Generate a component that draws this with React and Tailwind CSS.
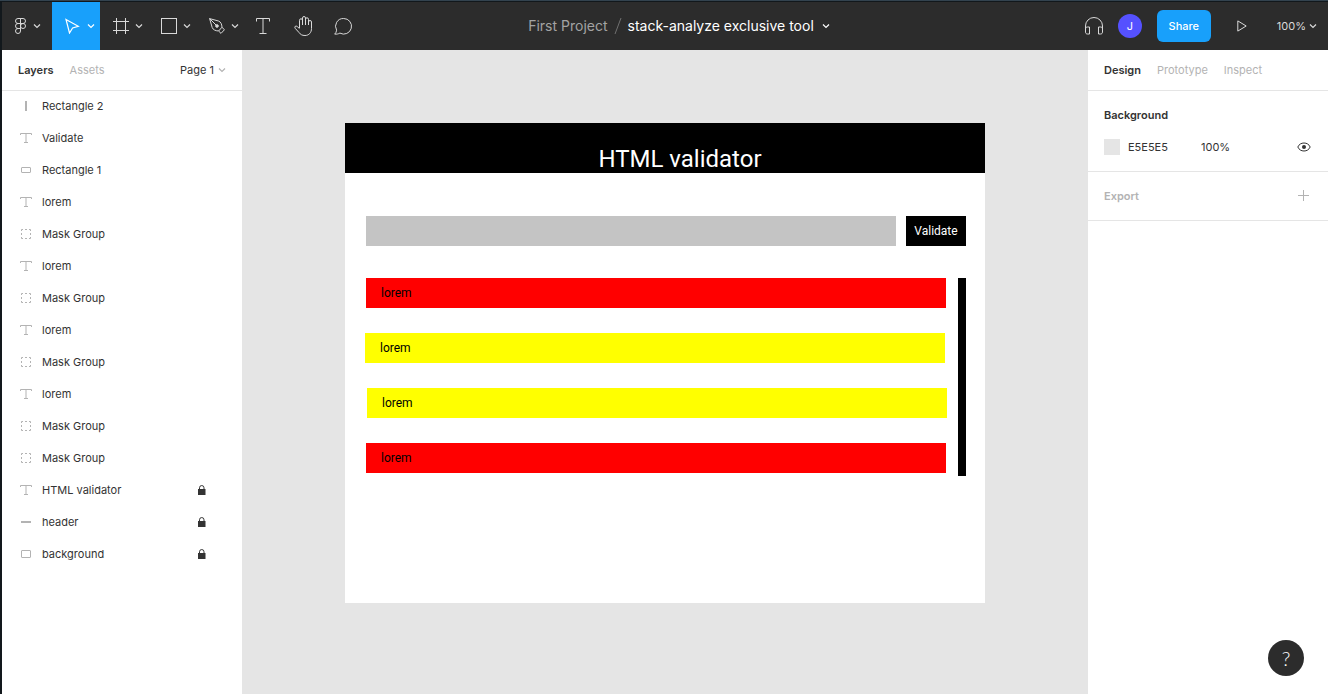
import React from "react";

function Icon({ w = 16, h = 16, className = "", children }) {
  return (
    <svg
      width={w}
      height={h}
      viewBox={`0 0 ${w} ${h}`}
      fill="none"
      stroke="currentColor"
      strokeWidth="1"
      aria-hidden="true"
      className={`shrink-0 ${className}`}
    >
      {children}
    </svg>
  );
}

const Chevron = ({ className = "" }) => (
  <Icon w={8} h={6} className={className}>
    <path d="M1 1.5 4 4.5 7 1.5" strokeWidth="1.2" />
  </Icon>
);

const LogoIcon = () => (
  <Icon w={12} h={16}>
    <path d="M5.5.5H3a2.5 2.5 0 0 0 0 5h2.500zM5.500.5H8a2.500 2.500 0 0 1 0 5H5.500zM5.500 5.500H3a2.500 2.500 0 0 0 0 5h2.500zM5.500 10.500H3A2.500 2.500 0 1 0 5.500 13z" />
    <circle cx="8" cy="8" r="2.5" />
  </Icon>
);

const MoveIcon = () => (
  <Icon>
    <path d="M1 1.5 13.300 8.300 7.600 9.900 4.500 15z" strokeWidth="1.2" />
  </Icon>
);

const FrameIcon = () => (
  <Icon>
    <path d="M3.500 0v16M12.500 0v16M0 3.500h16M0 12.500h16" />
  </Icon>
);

const RectIcon = () => (
  <Icon>
    <rect x=".5" y=".5" width="15" height="15" />
  </Icon>
);

const PenIcon = () => (
  <Icon>
    <path d="M.6.6 9.500 3c2.300.8 3.300 3.200 3.500 6.200L9.600 13C6.500 12.800 4 11.800 3.200 9.500zM.6.6l7 7" />
    <path d="m13 9.200 2.400 2.600-3.400 3.600-2.400-2.400" />
    <circle cx="8" cy="8" r="1.300" fill="currentColor" />
  </Icon>
);

const TextIcon = () => (
  <Icon w={14}>
    <path d="M.5 3.500v-3h13v3M7 .5v15M3.500 15.500h7" />
  </Icon>
);

const HandIcon = () => (
  <Icon w={19} h={20}>
    <path d="M5.500 12V4.300a1.500 1.500 0 0 1 3 0V9M8.500 9V2a1.500 1.500 0 0 1 3 0v7M11.500 9V3.300a1.500 1.500 0 0 1 3 0V9M14.500 6a1.500 1.500 0 0 1 3 0v6.500c0 4-2.500 7-6.500 7-3 0-4.500-1-6-3L1.200 12.300c-1.300-1.700.8-3 2-1.800L5.500 12.600" />
  </Icon>
);

const CommentIcon = () => (
  <Icon w={18} h={17}>
    <path d="M9.700.5a7.800 7.800 0 1 1-3.800 14.600C4.300 16 2.600 16.300.7 16.100c1.100-1 1.700-2.300 1.900-3.900A7.800 7.800 0 0 1 9.700.5z" />
  </Icon>
);

const HeadphonesIcon = () => (
  <Icon w={18} h={18}>
    <path d="M.5 15V9a8.500 8.500 0 0 1 17 0v6M.5 12c0-1.300.7-2 2-2h2v7h-2c-1.300 0-2-.7-2-2zM17.500 12c0-1.300-.7-2-2-2h-2v7h2c1.300 0 2-.7 2-2z" />
  </Icon>
);

const PlayIcon = () => (
  <Icon w={10} h={12}>
    <path d="M.8.9v10.200L9.200 6z" />
  </Icon>
);

const EyeIcon = () => (
  <Icon w={14} h={10}>
    <path d="M.8 5C2 2.300 4.300 1 7 1s5 1.300 6.200 4C12 7.700 9.700 9 7 9S2 7.700.8 5z" />
    <circle cx="7" cy="5" r="2" fill="currentColor" stroke="none" />
  </Icon>
);

const PlusIcon = () => (
  <Icon w={12} h={12}>
    <path d="M5.500 0v11M0 5.500h11" />
  </Icon>
);

const LockIcon = () => (
  <Icon w={8} h={10}>
    <path d="M1.500 5V2.800a2 2 0 0 1 4.500 0V5" />
    <rect x="0" y="4" width="7.500" height="6" fill="currentColor" stroke="none" />
  </Icon>
);

const layerIcons = {
  bar: <path d="M6 1v10" strokeWidth="2" />,
  text: <path d="M.5 3V1.500h11V3M6 1.500v9M4 10.500h4" />,
  rect: <rect x="1.500" y="3.500" width="9" height="5" rx=".5" />,
  group: (
    <path d="M1.500 3V1.500H3M5 1.500h2M9 1.500h1.500V3M10.500 5v2M10.500 9v1.500H9M7 10.500H5M3 10.500H1.500V9M1.500 7V5" />
  ),
  line: <path d="M1 6h10" strokeWidth="2" />,
  box: <rect x="1.500" y="2.500" width="9" height="7" rx=".5" />,
};

const layers = [
  ["bar", "Rectangle 2"],
  ["text", "Validate"],
  ["rect", "Rectangle 1"],
  ["text", "lorem"],
  ["group", "Mask Group"],
  ["text", "lorem"],
  ["group", "Mask Group"],
  ["text", "lorem"],
  ["group", "Mask Group"],
  ["text", "lorem"],
  ["group", "Mask Group"],
  ["group", "Mask Group"],
  ["text", "HTML validator", true],
  ["line", "header", true],
  ["box", "background", true],
];

const messages = [
  "left-[21px] top-[155px] bg-[#ff0000]",
  "left-[20px] top-[210px] bg-[#ffff00]",
  "left-[22px] top-[265px] bg-[#ffff00]",
  "left-[21px] top-[320px] bg-[#ff0000]",
];

function MenuTool({ label, active, children }) {
  return (
    <button
      aria-label={label}
      className={`flex w-12 items-center justify-center gap-1.5 pl-2 ${active ? "bg-[#18a0fb] text-white" : "text-[#d9d9d9]"}`}
    >
      {children}
      <Chevron />
    </button>
  );
}

function Tool({ label, children }) {
  return (
    <button aria-label={label} className="flex w-10 items-center justify-center pr-0.5 text-[#d9d9d9]">
      {children}
    </button>
  );
}

function Toolbar() {
  return (
    <header className="grid h-12 shrink-0 grid-cols-[1fr_auto_1fr] bg-[#2c2c2c]">
      <div className="flex">
        <button aria-label="Main menu" className="flex w-[50px] items-center gap-1.5 pl-[13px] text-[#d9d9d9]">
          <LogoIcon />
          <Chevron />
        </button>
        <MenuTool label="Move" active><MoveIcon /></MenuTool>
        <MenuTool label="Frame"><FrameIcon /></MenuTool>
        <MenuTool label="Rectangle"><RectIcon /></MenuTool>
        <MenuTool label="Pen"><PenIcon /></MenuTool>
        <Tool label="Text"><TextIcon /></Tool>
        <Tool label="Hand"><HandIcon /></Tool>
        <Tool label="Comment"><CommentIcon /></Tool>
      </div>
      <div className="flex items-center pl-7 text-sm whitespace-nowrap">
        <a href="#project" className="text-[#a3a3a3]">First Project</a>
        <Icon w={8} h={18} className="mx-1.5 text-[#707070]"><path d="M1 17 7 1" /></Icon>
        <button className="flex items-center gap-2 text-white">
          stack-analyze exclusive tool
          <Chevron />
        </button>
      </div>
      <div className="flex items-center justify-end pr-[11px] text-[#d9d9d9]">
        <button aria-label="Audio"><HeadphonesIcon /></button>
        <button aria-label="Account" className="ml-[15px] size-6 rounded-full bg-[#5551ff] text-[11px] text-white">J</button>
        <button className="ml-[15px] h-8 w-[54px] rounded-md bg-[#18a0fb] text-[11px] font-medium text-white">Share</button>
        <button aria-label="Present" className="ml-6 px-0.5"><PlayIcon /></button>
        <button className="ml-7 flex items-center gap-[3px] text-[11px]">
          100%
          <Chevron />
        </button>
      </div>
    </header>
  );
}

function LayersPanel() {
  return (
    <aside className="w-60 shrink-0 overflow-y-auto bg-white">
      <div className="flex h-10 items-center px-4 shadow-[0_1px_0_#e5e5e5]">
        <button className="font-semibold">Layers</button>
        <button className="ml-4 text-[#b3b3b3]">Assets</button>
        <button className="ml-auto flex items-center gap-1">
          Page 1
          <Chevron className="text-[#b3b3b3]" />
        </button>
      </div>
      <ul>
        {layers.map(([kind, name, locked], i) => (
          <li key={i} className="flex h-8 items-center pr-9 pl-[18px]">
            <Icon w={12} h={12} className="text-[#b3b3b3]">{layerIcons[kind]}</Icon>
            <span className="ml-2.5">{name}</span>
            {locked && (
              <button aria-label={`Unlock ${name}`} className="ml-auto">
                <LockIcon />
              </button>
            )}
          </li>
        ))}
      </ul>
    </aside>
  );
}

function Canvas() {
  return (
    <main className="min-w-0 flex-1 overflow-hidden bg-[#e5e5e5] pt-[73px]">
      <div className="relative mx-auto h-[480px] w-[640px] bg-white font-[Roboto,sans-serif] text-xs text-black">
        <div className="flex h-[50px] items-end justify-center bg-black pl-[30px]">
          <h1 className="text-2xl leading-7 text-white">HTML validator</h1>
        </div>
        <input aria-label="Address" className="absolute top-[93px] left-[21px] h-[30px] w-[530px] bg-[#c4c4c4] px-4" />
        <button className="absolute top-[93px] left-[561px] h-[30px] w-[60px] bg-black text-white">Validate</button>
        {messages.map((place) => (
          <p key={place} className={`absolute flex h-[30px] w-[580px] items-center pl-[15px] ${place}`}>
            lorem
          </p>
        ))}
        <div className="absolute top-[155px] left-[613px] h-[198px] w-2 bg-black" />
      </div>
    </main>
  );
}

function DesignPanel() {
  return (
    <aside className="w-60 shrink-0 bg-white">
      <div className="flex h-[41px] items-center gap-4 border-b border-[#e5e5e5] px-4 text-[#b3b3b3]">
        <button className="font-semibold text-[#333333]">Design</button>
        <button>Prototype</button>
        <button>Inspect</button>
      </div>
      <section className="border-b border-[#e5e5e5] py-2 pr-[17px] pl-4">
        <h2 className="flex h-8 items-center font-semibold">Background</h2>
        <div className="flex h-8 items-center">
          <span className="size-4 bg-[#e5e5e5]" />
          <input aria-label="Background colour" defaultValue="E5E5E5" className="ml-2 w-[73px]" />
          <input aria-label="Opacity" defaultValue="100%" className="w-10" />
          <button aria-label="Toggle visibility" className="ml-auto"><EyeIcon /></button>
        </div>
      </section>
      <section className="flex h-[49px] items-center justify-between border-b border-[#e5e5e5] pr-[18px] pl-4 text-[#b3b3b3]">
        <h2 className="font-semibold">Export</h2>
        <button aria-label="Add export"><PlusIcon /></button>
      </section>
    </aside>
  );
}

export default function App() {
  return (
    <div className="flex h-screen flex-col border-t border-[#33434f] bg-[#12181c] font-[Inter,sans-serif] text-[11px] text-[#333333]">
      <div className="mt-px ml-0.5 flex min-h-0 flex-1 flex-col">
        <Toolbar />
        <div className="flex min-h-0 flex-1">
          <LayersPanel />
          <Canvas />
          <DesignPanel />
        </div>
      </div>
      <button
        aria-label="Help"
        className="fixed right-6 bottom-[18px] size-9 rounded-full bg-[#2c2c2c] font-[Lato,sans-serif] text-xl font-light text-white"
      >
        ?
      </button>
    </div>
  );
}
